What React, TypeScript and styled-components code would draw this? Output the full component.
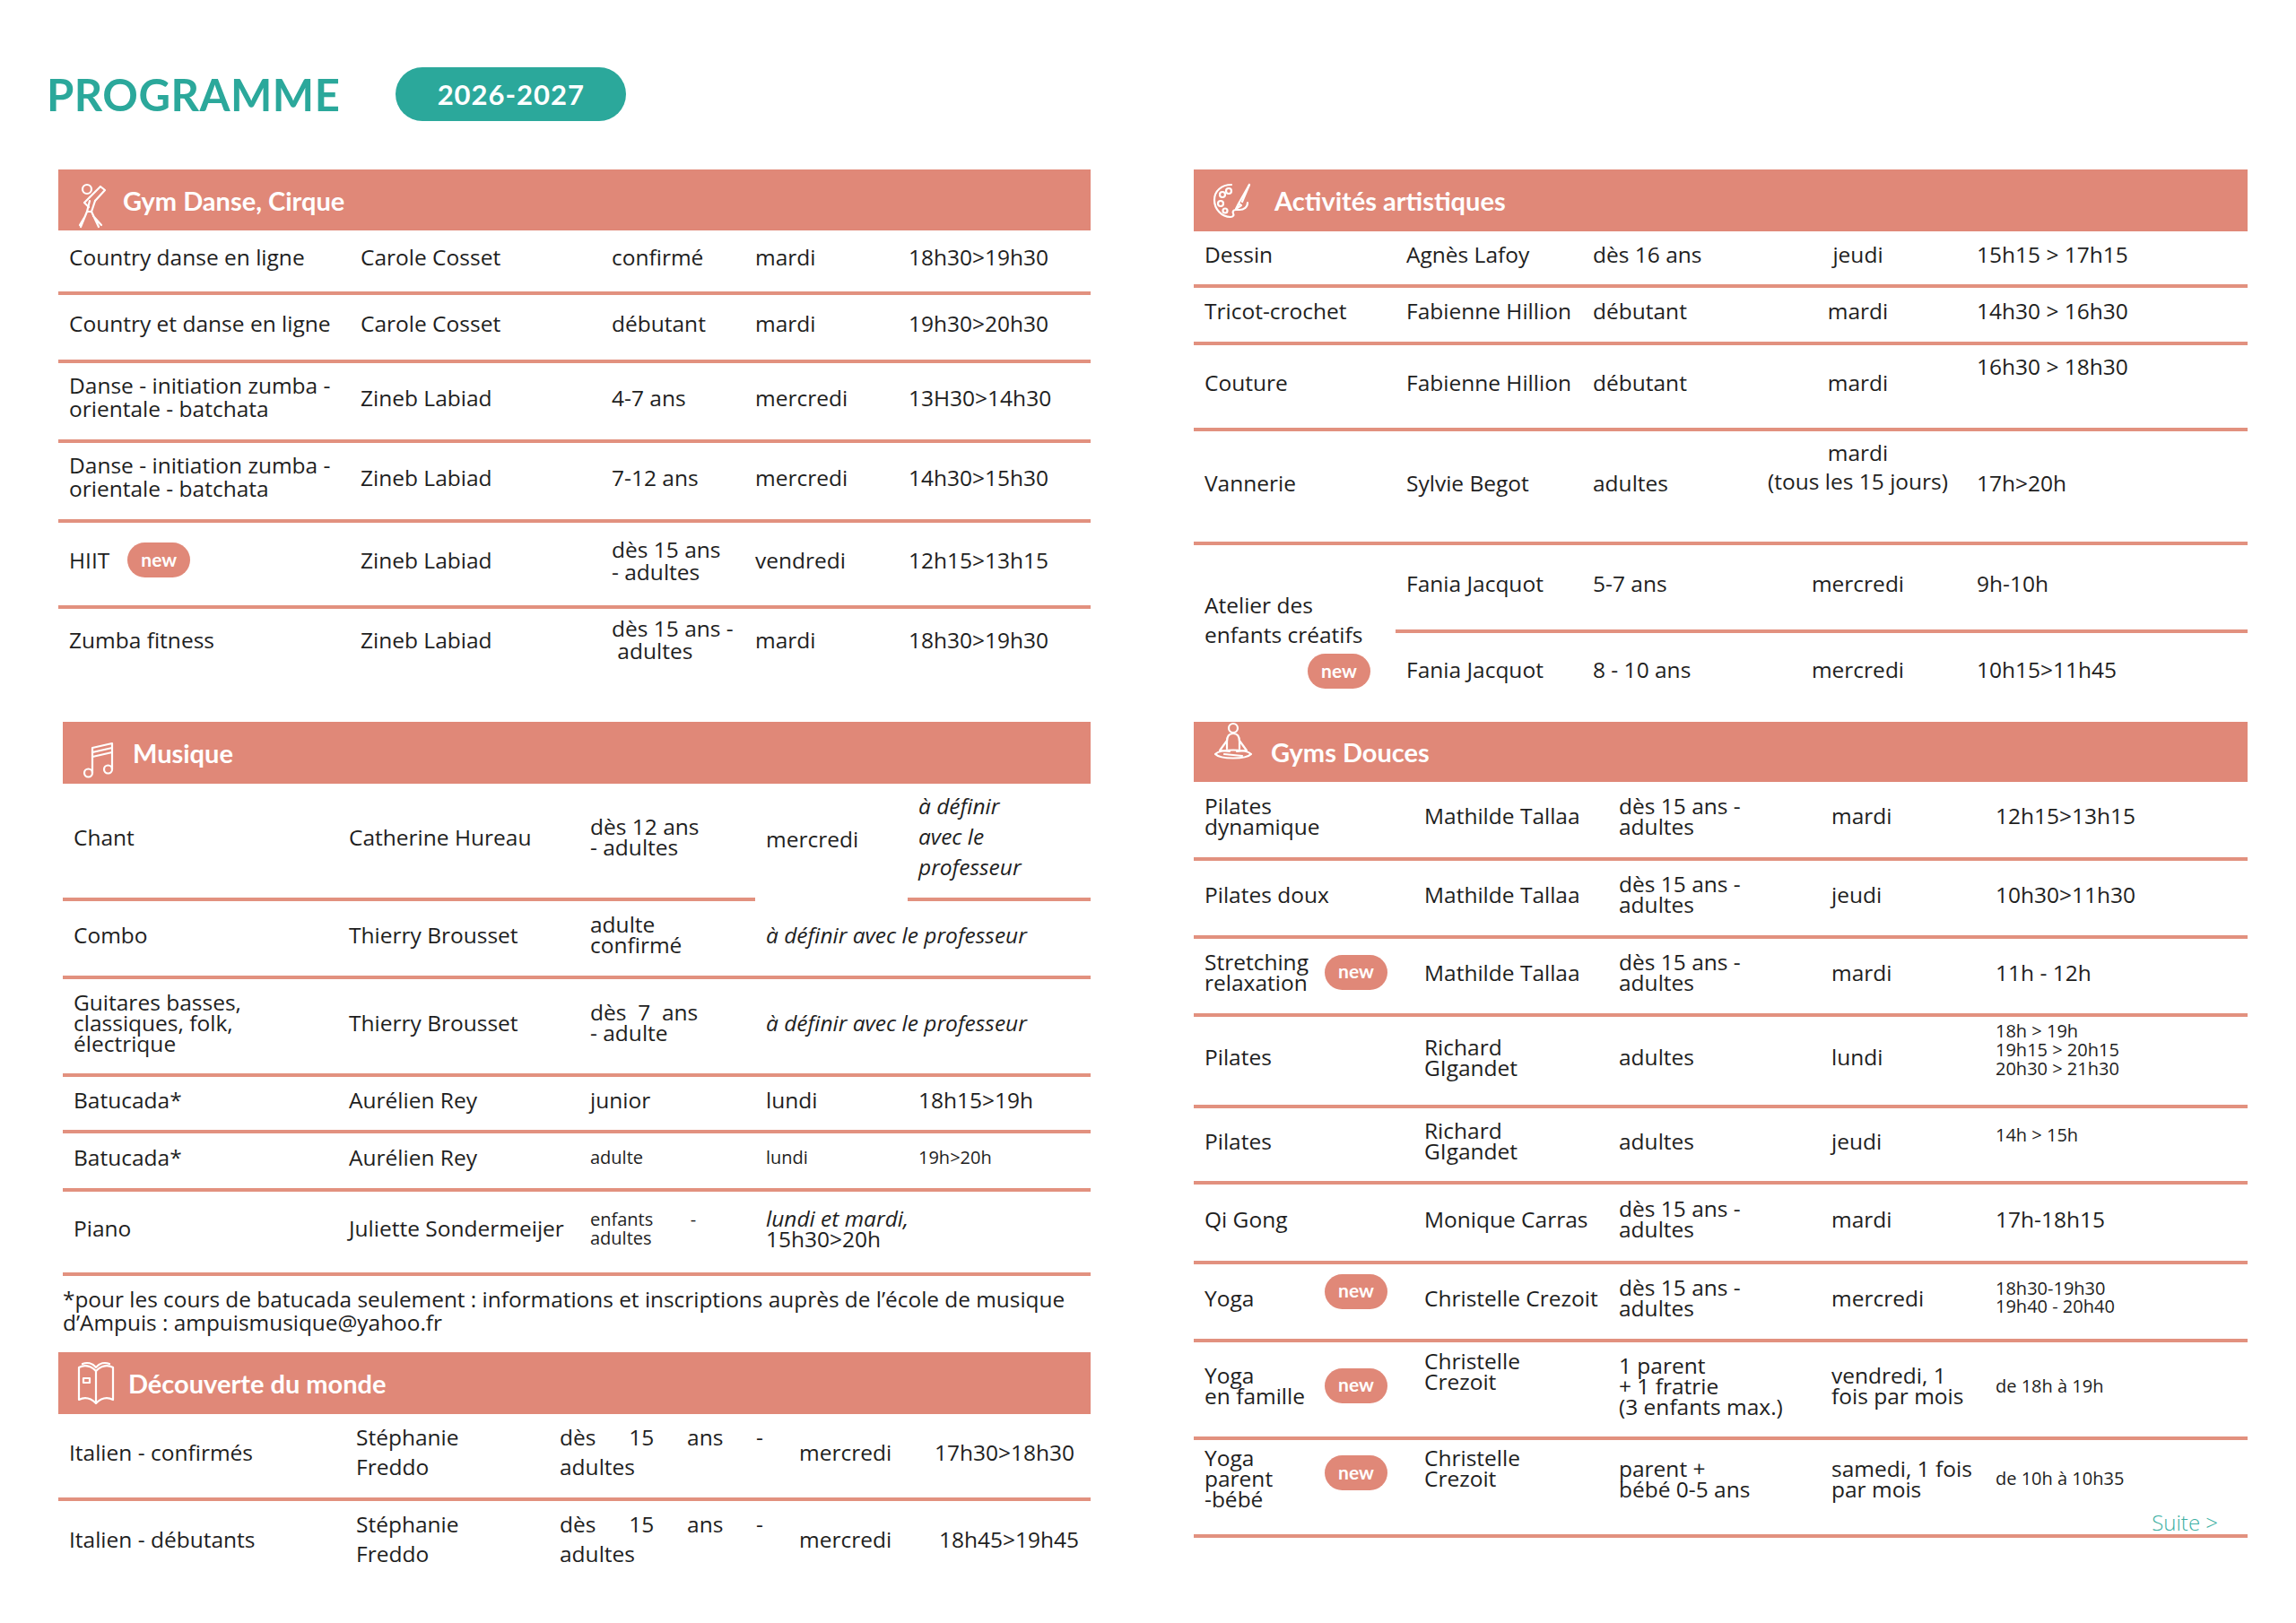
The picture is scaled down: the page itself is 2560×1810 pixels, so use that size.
import React from 'react';
import styled, { createGlobalStyle } from 'styled-components';

const SALMON = '#e08878';
const LINE = '#e2917f';
const TEAL = '#2ba89b';
const INK = '#1e1e1e';

const GlobalStyle = createGlobalStyle`
  html, body {
    margin: 0;
    padding: 0;
    background: #ffffff;
  }
  body {
    font-family: 'Open Sans', 'Liberation Sans', sans-serif;
    font-weight: 400;
    color: ${INK};
  }
`;

const Page = styled.div`
  width: 2560px;
  height: 1810px;
  overflow: hidden;
  background: #fff;
`;

const TopBar = styled.header`
  display: flex;
  align-items: center;
  gap: 62px;
  height: 189px;
  box-sizing: border-box;
  padding: 75px 0 54px 52px;
`;

const Title = styled.h1`
  margin: 0;
  font-family: 'Lato', 'Liberation Sans', sans-serif;
  font-size: 49px;
  font-weight: 700;
  letter-spacing: 0.5px;
  color: ${TEAL};
  line-height: 60px;
`;

const YearPill = styled.div`
  display: flex;
  align-items: center;
  justify-content: center;
  width: 257px;
  height: 60px;
  border-radius: 30px;
  background: ${TEAL};
  color: #fff;
  font-family: 'Lato', 'Liberation Sans', sans-serif;
  font-size: 31px;
  font-weight: 700;
  letter-spacing: 1px;
`;

const Columns = styled.main`
  display: grid;
  grid-template-columns: 1151px 1175px;
  column-gap: 115px;
  padding-left: 65px;
  align-items: start;
`;

const Column = styled.div`
  display: flex;
  flex-direction: column;
`;

const Section = styled.section<{ $mt?: number; $inset?: number }>`
  position: relative;
  margin-top: ${(p) => p.$mt ?? 0}px;
  margin-left: ${(p) => p.$inset ?? 0}px;
`;

const SectionHeader = styled.div<{ $h: number; $gap?: number }>`
  display: flex;
  align-items: center;
  gap: ${(p) => p.$gap ?? 14}px;
  height: ${(p) => p.$h}px;
  padding-left: 20px;
  background: ${SALMON};
  color: #fff;
  font-family: 'Lato', 'Liberation Sans', sans-serif;
  font-size: 29px;
  font-weight: 700;
  svg {
    flex: none;
  }
`;

const Row = styled.div<{ $cols: string; $h: number; $line?: boolean }>`
  display: grid;
  grid-template-columns: ${(p) => p.$cols};
  height: ${(p) => p.$h}px;
  border-bottom: ${(p) => (p.$line ? `4px solid ${LINE}` : 'none')};
`;

const Cell = styled.div<{
  $span?: number;
  $lh?: number;
  $size?: number;
  $italic?: boolean;
  $center?: boolean;
  $pl?: number;
  $pt?: number;
  $pb?: number;
  $top?: boolean;
  $rule?: boolean;
}>`
  grid-column: span ${(p) => p.$span ?? 1};
  display: flex;
  flex-direction: column;
  justify-content: ${(p) => (p.$top ? 'flex-start' : 'center')};
  align-items: ${(p) => (p.$center ? 'center' : 'flex-start')};
  text-align: ${(p) => (p.$center ? 'center' : 'left')};
  padding: ${(p) => p.$pt ?? 0}px 0 ${(p) => p.$pb ?? 9}px ${(p) => p.$pl ?? 12}px;
  font-size: ${(p) => p.$size ?? 24.5}px;
  line-height: ${(p) => p.$lh ?? 25}px;
  font-style: ${(p) => (p.$italic ? 'italic' : 'normal')};
  white-space: pre;
  border-bottom: ${(p) => (p.$rule ? `4px solid ${LINE}` : 'none')};
`;

const Spread = styled.span<{ $w: number }>`
  display: block;
  width: ${(p) => p.$w}px;
  text-align: justify;
  text-align-last: justify;
`;

const ItalicFirstLine = styled.span`
  display: block;
  &::first-line {
    font-style: italic;
  }
`;

const NameWithBadge = styled.div<{ $gap?: number }>`
  display: flex;
  align-items: center;
  gap: ${(p) => p.$gap ?? 0}px;
`;

const Name = styled.span<{ $w?: number; $lh?: number }>`
  display: block;
  width: ${(p) => (p.$w ? `${p.$w}px` : 'auto')};
  line-height: ${(p) => p.$lh ?? 25}px;
`;

const NewBadge = styled.span<{ $indent?: number }>`
  display: inline-flex;
  align-items: center;
  justify-content: center;
  width: 70px;
  height: 39px;
  margin-left: ${(p) => p.$indent ?? 0}px;
  border-radius: 20px;
  background: ${SALMON};
  color: #fff;
  font-family: 'Lato', 'Liberation Sans', sans-serif;
  font-size: 21px;
  font-weight: 700;
  font-style: normal;
  line-height: 1;
  padding-bottom: 3px;
  box-sizing: border-box;
`;

const Footnote = styled.p`
  margin: 0;
  padding: 13px 0 20px;
  font-size: 24.4px;
  line-height: 26px;
  white-space: pre;
`;

const AtelierBlock = styled.div`
  display: grid;
  grid-template-columns: 225px 1fr;
`;

const AtelierLabel = styled.div`
  display: flex;
  align-items: center;
  padding: 22px 0 0 12px;
`;

const LabelStack = styled.div`
  display: flex;
  flex-direction: column;
  align-items: flex-start;
  gap: 5px;
  font-size: 24.5px;
  line-height: 33px;
  white-space: pre;
`;

const SubRows = styled.div`
  display: flex;
  flex-direction: column;
`;

const Suite = styled.span`
  position: absolute;
  right: 33px;
  bottom: 5px;
  font-size: 24px;
  font-weight: 300;
  line-height: 1;
  color: #3db0a3;
`;

/* ---------- icons ---------- */

const iconProps = {
  fill: 'none',
  stroke: '#fff',
  strokeWidth: 2.2,
  strokeLinecap: 'round' as const,
  strokeLinejoin: 'round' as const,
};

const DanceIcon = () => (
  <svg width="38" height="52" viewBox="0 0 38 52" {...iconProps} style={{ alignSelf: 'flex-end', marginBottom: 2 }}>
    <circle cx="12" cy="8" r="5" />
    <path d="M15 17 L27 5 L32 9 L21 21" />
    <path d="M15 17 L9 23 L14 28" />
    <path d="M21 21 L17 33 L12 33 L15 21" />
    <path d="M12 33 L5 50 M17 33 L25 50 M10 38 L4 48 M19 38 L28 48" />
  </svg>
);

const PaletteIcon = () => (
  <svg width="46" height="42" viewBox="0 0 46 42" {...iconProps}>
    <path d="M22 3C11 3 3 10 3 20s8 19 18 19c3 0 4-2 3-4s0-4 3-4h4c5 0 9-3 9-8" />
    <circle cx="12" cy="14" r="3" />
    <circle cx="10" cy="24" r="3" />
    <circle cx="19" cy="10" r="3" />
    <circle cx="15" cy="32" r="2.5" />
    <path d="M42 3 L30 24 M30 24 L27 30 L33 26 Z" />
    <path d="M42 3 L34 22" />
  </svg>
);

const MusicIcon = () => (
  <svg width="44" height="44" viewBox="0 0 44 44" {...iconProps} style={{ alignSelf: 'flex-end', marginBottom: 6 }}>
    <path d="M13 38 V10 L35 5 V34" />
    <path d="M13 15 L35 10 M13 20 L35 15" />
    <circle cx="8.5" cy="38" r="4.5" />
    <circle cx="30.5" cy="34" r="4.5" />
  </svg>
);

const LotusIcon = () => (
  <svg width="48" height="44" viewBox="0 0 48 44" {...iconProps} style={{ alignSelf: 'flex-start' }}>
    <circle cx="24" cy="7" r="5" />
    <path d="M24 13 C18 13 17 18 17 22 V30 M24 13 C30 13 31 18 31 22 V30" />
    <path d="M17 21 L9 32 L20 33 M31 21 L39 32 L28 33" />
    <path d="M4 36 C10 30 38 30 44 36 C38 42 10 42 4 36 Z" />
    <path d="M14 36 L34 38" />
  </svg>
);

const BookIcon = () => (
  <svg width="44" height="52" viewBox="0 0 44 52" {...iconProps}>
    <path d="M22 12 C16 6 9 5 3 8 V44 C9 41 16 42 22 48 C28 42 35 41 41 44 V8 C35 5 28 6 22 12 Z" />
    <path d="M22 12 V48" />
    <path d="M7 4 C12 2 18 3 22 8 C26 3 32 2 37 4" />
    <rect x="8" y="20" width="7" height="5" />
  </svg>
);

/* ---------- column templates ---------- */

const GYM = '325px 280px 160px 171px 1fr';
const MUS = '307px 269px 196px 170px 1fr';
const DEC = '320px 227px 267px 151px 1fr';
const ART = '225px 208px 187px 241px 1fr';
const ART_SUB = '208px 187px 241px 1fr';
const DOUX = '245px 217px 237px 183px 1fr';

export default function App() {
  return (
    <Page>
      <GlobalStyle />
      <TopBar>
        <Title>PROGRAMME</Title>
        <YearPill>2026-2027</YearPill>
      </TopBar>

      <Columns>
        <Column>
          {/* Gym Danse, Cirque */}
          <Section>
            <SectionHeader $h={68}>
              <DanceIcon />
              Gym Danse, Cirque
            </SectionHeader>
            <Row $cols={GYM} $h={68} $line>
              <Cell>Country danse en ligne</Cell>
              <Cell>Carole Cosset</Cell>
              <Cell>confirmé</Cell>
              <Cell>mardi</Cell>
              <Cell>18h30&gt;19h30</Cell>
            </Row>
            <Row $cols={GYM} $h={72} $line>
              <Cell>Country et danse en ligne</Cell>
              <Cell>Carole Cosset</Cell>
              <Cell>débutant</Cell>
              <Cell>mardi</Cell>
              <Cell>19h30&gt;20h30</Cell>
            </Row>
            <Row $cols={GYM} $h={85} $line>
              <Cell $lh={26}>{'Danse - initiation zumba -\norientale - batchata'}</Cell>
              <Cell>Zineb Labiad</Cell>
              <Cell>4-7 ans</Cell>
              <Cell>mercredi</Cell>
              <Cell>13H30&gt;14h30</Cell>
            </Row>
            <Row $cols={GYM} $h={85} $line>
              <Cell $lh={26}>{'Danse - initiation zumba -\norientale - batchata'}</Cell>
              <Cell>Zineb Labiad</Cell>
              <Cell>7-12 ans</Cell>
              <Cell>mercredi</Cell>
              <Cell>14h30&gt;15h30</Cell>
            </Row>
            <Row $cols={GYM} $h={92} $line>
              <Cell>
                <NameWithBadge $gap={20}>
                  <Name>HIIT</Name>
                  <NewBadge>new</NewBadge>
                </NameWithBadge>
              </Cell>
              <Cell>Zineb Labiad</Cell>
              <Cell $lh={25}>{'dès 15 ans\n- adultes'}</Cell>
              <Cell>vendredi</Cell>
              <Cell>12h15&gt;13h15</Cell>
            </Row>
            <Row $cols={GYM} $h={77}>
              <Cell>Zumba fitness</Cell>
              <Cell>Zineb Labiad</Cell>
              <Cell $lh={25}>{'dès 15 ans -\n adultes'}</Cell>
              <Cell>mardi</Cell>
              <Cell>18h30&gt;19h30</Cell>
            </Row>
          </Section>

          {/* Musique */}
          <Section $mt={49} $inset={5}>
            <SectionHeader $h={69}>
              <MusicIcon />
              Musique
            </SectionHeader>
            <Row $cols={MUS} $h={131}>
              <Cell $rule>Chant</Cell>
              <Cell $rule>Catherine Hureau</Cell>
              <Cell $rule $lh={23}>{'dès 12 ans\n- adultes'}</Cell>
              <Cell>mercredi</Cell>
              <Cell $rule $italic $lh={34}>{'à définir\navec le\nprofesseur'}</Cell>
            </Row>
            <Row $cols={MUS} $h={83} $line>
              <Cell>Combo</Cell>
              <Cell>Thierry Brousset</Cell>
              <Cell $lh={23}>{'adulte\nconfirmé'}</Cell>
              <Cell $span={2} $italic>à définir avec le professeur</Cell>
            </Row>
            <Row $cols={MUS} $h={105} $line>
              <Cell $lh={23}>{'Guitares basses,\nclassiques, folk,\nélectrique'}</Cell>
              <Cell>Thierry Brousset</Cell>
              <Cell $lh={23}>{'dès  7  ans\n- adulte'}</Cell>
              <Cell $span={2} $italic>à définir avec le professeur</Cell>
            </Row>
            <Row $cols={MUS} $h={59} $line>
              <Cell>Batucada*</Cell>
              <Cell>Aurélien Rey</Cell>
              <Cell>junior</Cell>
              <Cell>lundi</Cell>
              <Cell>18h15&gt;19h</Cell>
            </Row>
            <Row $cols={MUS} $h={61} $line>
              <Cell>Batucada*</Cell>
              <Cell>Aurélien Rey</Cell>
              <Cell $size={20}>adulte</Cell>
              <Cell $size={20}>lundi</Cell>
              <Cell $size={20}>19h&gt;20h</Cell>
            </Row>
            <Row $cols={MUS} $h={90} $line>
              <Cell>Piano</Cell>
              <Cell>Juliette Sondermeijer</Cell>
              <Cell $size={20} $lh={21}>{'enfants        -\nadultes'}</Cell>
              <Cell $span={2} $lh={23}>
                <ItalicFirstLine>{'lundi et mardi,\n15h30>20h'}</ItalicFirstLine>
              </Cell>
            </Row>
            <Footnote>
              {'*pour les cours de batucada seulement : informations et inscriptions auprès de l’école de musique\nd’Ampuis : ampuismusique@yahoo.fr'}
            </Footnote>
          </Section>

          {/* Découverte du monde */}
          <Section>
            <SectionHeader $h={69}>
              <BookIcon />
              Découverte du monde
            </SectionHeader>
            <Row $cols={DEC} $h={93} $line>
              <Cell>Italien - confirmés</Cell>
              <Cell $lh={33}>{'Stéphanie\nFreddo'}</Cell>
              <Cell $lh={33}>
                <Spread $w={227}>dès 15 ans -</Spread>
                adultes
              </Cell>
              <Cell>mercredi</Cell>
              <Cell>17h30&gt;18h30</Cell>
            </Row>
            <Row $cols={DEC} $h={93}>
              <Cell>Italien - débutants</Cell>
              <Cell $lh={33}>{'Stéphanie\nFreddo'}</Cell>
              <Cell $lh={33}>
                <Spread $w={227}>dès 15 ans -</Spread>
                adultes
              </Cell>
              <Cell>mercredi</Cell>
              <Cell $pl={17}>18h45&gt;19h45</Cell>
            </Row>
          </Section>
        </Column>

        <Column>
          {/* Activités artistiques */}
          <Section>
            <SectionHeader $h={69} $gap={24}>
              <PaletteIcon />
              Activités artistiques
            </SectionHeader>
            <Row $cols={ART} $h={59} $line>
              <Cell>Dessin</Cell>
              <Cell>Agnès Lafoy</Cell>
              <Cell>dès 16 ans</Cell>
              <Cell $center $pl={0}>jeudi</Cell>
              <Cell>15h15 &gt; 17h15</Cell>
            </Row>
            <Row $cols={ART} $h={60} $line>
              <Cell>Tricot-crochet</Cell>
              <Cell>Fabienne Hillion</Cell>
              <Cell>débutant</Cell>
              <Cell $center $pl={0}>mardi</Cell>
              <Cell>14h30 &gt; 16h30</Cell>
            </Row>
            <Row $cols={ART} $h={92} $line>
              <Cell>Couture</Cell>
              <Cell>Fabienne Hillion</Cell>
              <Cell>débutant</Cell>
              <Cell $center $pl={0}>mardi</Cell>
              <Cell $top $pt={11}>16h30 &gt; 18h30</Cell>
            </Row>
            <Row $cols={ART} $h={123} $line>
              <Cell>Vannerie</Cell>
              <Cell>Sylvie Begot</Cell>
              <Cell>adultes</Cell>
              <Cell $center $pl={0} $lh={32} $pb={44}>{'mardi\n(tous les 15 jours)'}</Cell>
              <Cell>17h&gt;20h</Cell>
            </Row>
            <AtelierBlock>
              <AtelierLabel>
                <LabelStack>
                  <span>{'Atelier des\nenfants créatifs'}</span>
                  <NewBadge $indent={115}>new</NewBadge>
                </LabelStack>
              </AtelierLabel>
              <SubRows>
                <Row $cols={ART_SUB} $h={94} $line>
                  <Cell>Fania Jacquot</Cell>
                  <Cell>5-7 ans</Cell>
                  <Cell $center $pl={0}>mercredi</Cell>
                  <Cell>9h-10h</Cell>
                </Row>
                <Row $cols={ART_SUB} $h={90}>
                  <Cell>Fania Jacquot</Cell>
                  <Cell>8 - 10 ans</Cell>
                  <Cell $center $pl={0}>mercredi</Cell>
                  <Cell>10h15&gt;11h45</Cell>
                </Row>
              </SubRows>
            </AtelierBlock>
          </Section>

          {/* Gyms Douces */}
          <Section $mt={9}>
            <SectionHeader $h={67} $gap={18}>
              <LotusIcon />
              Gyms Douces
            </SectionHeader>
            <Row $cols={DOUX} $h={84} $line>
              <Cell $lh={23}>{'Pilates\ndynamique'}</Cell>
              <Cell>Mathilde Tallaa</Cell>
              <Cell $lh={23}>{'dès 15 ans -\nadultes'}</Cell>
              <Cell>mardi</Cell>
              <Cell>12h15&gt;13h15</Cell>
            </Row>
            <Row $cols={DOUX} $h={83} $line>
              <Cell>Pilates doux</Cell>
              <Cell>Mathilde Tallaa</Cell>
              <Cell $lh={23}>{'dès 15 ans -\nadultes'}</Cell>
              <Cell>jeudi</Cell>
              <Cell>10h30&gt;11h30</Cell>
            </Row>
            <Row $cols={DOUX} $h={83} $line>
              <Cell>
                <NameWithBadge>
                  <Name $w={134} $lh={23}>{'Stretching\nrelaxation'}</Name>
                  <NewBadge>new</NewBadge>
                </NameWithBadge>
              </Cell>
              <Cell>Mathilde Tallaa</Cell>
              <Cell $lh={23}>{'dès 15 ans -\nadultes'}</Cell>
              <Cell>mardi</Cell>
              <Cell>11h - 12h</Cell>
            </Row>
            <Row $cols={DOUX} $h={98} $line>
              <Cell>Pilates</Cell>
              <Cell $lh={23}>{'Richard\nGIgandet'}</Cell>
              <Cell>adultes</Cell>
              <Cell>lundi</Cell>
              <Cell $size={20} $lh={21} $pb={26}>{'18h > 19h\n19h15 > 20h15\n20h30 > 21h30'}</Cell>
            </Row>
            <Row $cols={DOUX} $h={81} $line>
              <Cell>Pilates</Cell>
              <Cell $lh={23}>{'Richard\nGIgandet'}</Cell>
              <Cell>adultes</Cell>
              <Cell>jeudi</Cell>
              <Cell $size={20} $pb={22}>14h &gt; 15h</Cell>
            </Row>
            <Row $cols={DOUX} $h={85} $line>
              <Cell>Qi Gong</Cell>
              <Cell>Monique Carras</Cell>
              <Cell $lh={23}>{'dès 15 ans -\nadultes'}</Cell>
              <Cell>mardi</Cell>
              <Cell>17h-18h15</Cell>
            </Row>
            <Row $cols={DOUX} $h={83} $line>
              <Cell>
                <NameWithBadge>
                  <Name $w={134}>Yoga</Name>
                  <NewBadge style={{ marginTop: -14 }}>new</NewBadge>
                </NameWithBadge>
              </Cell>
              <Cell>Christelle Crezoit</Cell>
              <Cell $lh={23}>{'dès 15 ans -\nadultes'}</Cell>
              <Cell>mercredi</Cell>
              <Cell $size={20} $lh={20}>{'18h30-19h30\n19h40 - 20h40'}</Cell>
            </Row>
            <Row $cols={DOUX} $h={105} $line>
              <Cell>
                <NameWithBadge>
                  <Name $w={134} $lh={23}>{'Yoga\nen famille'}</Name>
                  <NewBadge>new</NewBadge>
                </NameWithBadge>
              </Cell>
              <Cell $lh={23} $pb={42}>{'Christelle\nCrezoit'}</Cell>
              <Cell $lh={23}>{'1 parent\n+ 1 fratrie\n(3 enfants max.)'}</Cell>
              <Cell $lh={23}>{'vendredi, 1\nfois par mois'}</Cell>
              <Cell $size={20}>de 18h à 19h</Cell>
            </Row>
            <Row $cols={DOUX} $h={105} $line>
              <Cell $pb={20}>
                <NameWithBadge>
                  <Name $w={134} $lh={23}>{'Yoga\nparent\n-bébé'}</Name>
                  <NewBadge style={{ marginTop: -12 }}>new</NewBadge>
                </NameWithBadge>
              </Cell>
              <Cell $lh={23} $pb={44}>{'Christelle\nCrezoit'}</Cell>
              <Cell $lh={23} $pb={20}>{'parent +\nbébé 0-5 ans'}</Cell>
              <Cell $lh={23} $pb={20}>{'samedi, 1 fois\npar mois'}</Cell>
              <Cell $size={20} $pb={20}>de 10h à 10h35</Cell>
            </Row>
            <Suite>Suite &gt;</Suite>
          </Section>
        </Column>
      </Columns>
    </Page>
  );
}
